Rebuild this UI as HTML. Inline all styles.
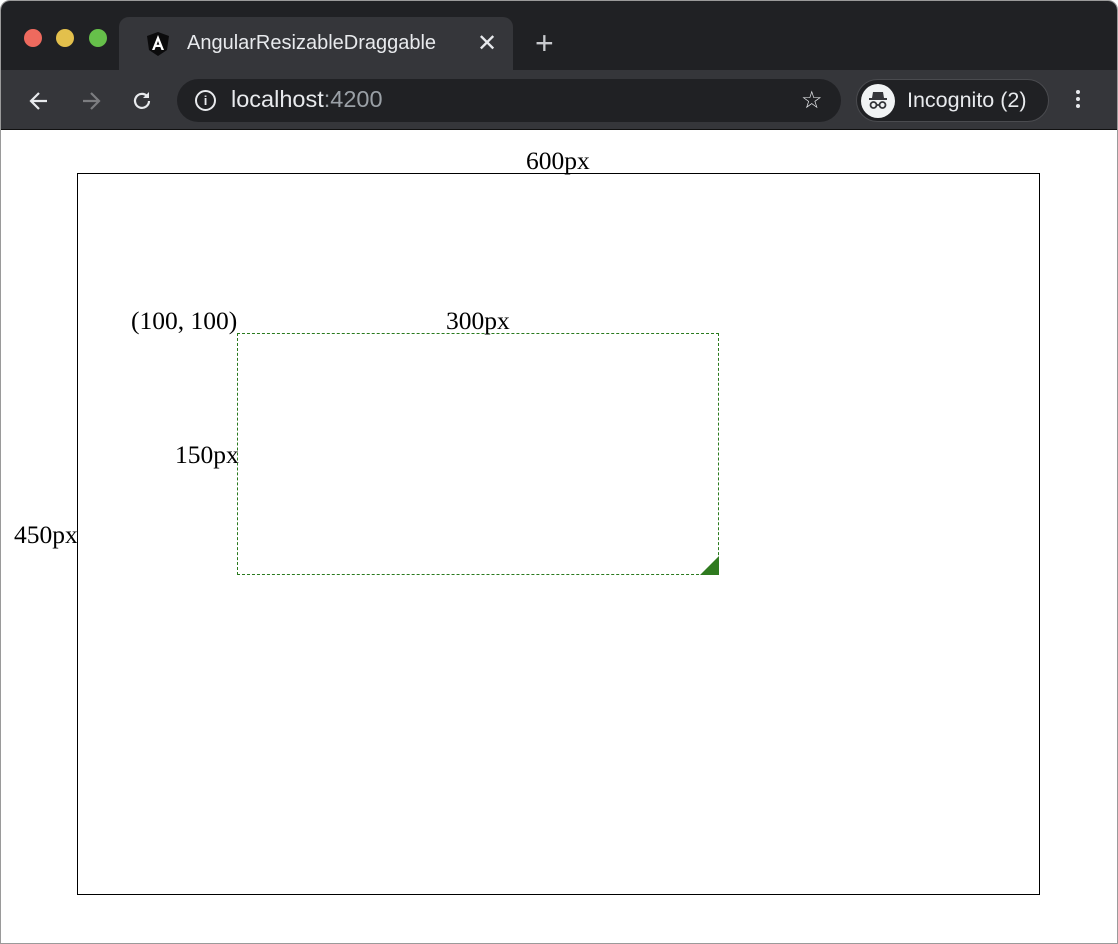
<!DOCTYPE html><html><head><style>
body{margin:0;width:1118px;height:944px;background:#fff;position:relative;overflow:hidden;font-family:"Liberation Sans",sans-serif}
.a{position:absolute}
.t{position:absolute;font-family:"Liberation Serif",serif;font-size:25.5px;color:#000;line-height:1}
</style></head><body>
<div class="a" style="left:0;top:0;width:1116px;height:942px;border:1px solid #9a9a9a;border-radius:10px 10px 0 0;overflow:hidden;background:#fff">
<div class="a" style="left:0;top:0;width:1116px;height:70px;background:#202124"></div>
<div class="a" style="left:0;top:69px;width:1116px;height:59px;background:#35363a;border-bottom:1px solid #111"></div>
<div class="a" style="left:23px;top:28px;width:18px;height:18px;border-radius:50%;background:#ee6a5e"></div>
<div class="a" style="left:55px;top:28px;width:18px;height:18px;border-radius:50%;background:#e3c04c"></div>
<div class="a" style="left:88px;top:28px;width:18px;height:18px;border-radius:50%;background:#66c04a"></div>
<div class="a" style="left:118px;top:16px;width:394px;height:54px;background:#35363a;border-radius:10px 10px 0 0"></div>
<svg class="a" style="left:146px;top:31px" width="22" height="24" viewBox="0 0 22 24"><path d="M11 0L0 4l2 14 9 6 9-6 2-14z" fill="#0b0b0c"/><path d="M11 3L5 18h2.5l1.2-3h4.6l1.2 3H17zM9.6 12.8L11 9l1.4 3.8z" fill="#fff"/></svg>
<div class="a" style="left:186px;top:31px;color:#e8eaed;font-size:20px">AngularResizableDraggable</div>
<div class="a" style="left:476px;top:28px;color:#e8eaed;font-size:24px">✕</div>
<div class="a" style="left:534px;top:24px;color:#c8cace;font-size:32px;font-weight:300">+</div>
<svg class="a" style="left:26px;top:88px" width="24" height="24" viewBox="0 0 24 24"><path d="M20 12H5M12 4l-8 8 8 8" stroke="#e8eaed" stroke-width="2.2" fill="none"/></svg>
<svg class="a" style="left:78px;top:88px" width="24" height="24" viewBox="0 0 24 24"><path d="M4 12h15M12 4l8 8-8 8" stroke="#7c7d80" stroke-width="2.2" fill="none"/></svg>
<svg class="a" style="left:129px;top:88px" width="24" height="24" viewBox="0 0 24 24"><path d="M19 12a7 7 0 1 1-2-5" stroke="#e8eaed" stroke-width="2.2" fill="none"/><path d="M19 3v6h-6z" fill="#e8eaed"/></svg>
<div class="a" style="left:176px;top:78px;width:664px;height:43px;background:#202124;border-radius:22px"></div>
<div class="a" style="left:194px;top:89px;width:17px;height:17px;border:2px solid #e8eaed;border-radius:50%;color:#e8eaed;font-size:13px;font-weight:bold;text-align:center;line-height:17px">i</div>
<div class="a" style="left:230px;top:85px;font-size:23.5px;color:#e8eaed">localhost<span style="color:#9aa0a6">:4200</span></div>
<div class="a" style="left:800px;top:85px;font-size:24px;color:#e8eaed">☆</div>
<div class="a" style="left:855px;top:78px;width:191px;height:41px;background:#202124;border:1px solid #4a4b4f;border-radius:22px"></div>
<div class="a" style="left:860px;top:83px;width:34px;height:34px;border-radius:50%;background:#f1f3f4"></div>
<svg class="a" style="left:865px;top:88px" width="24" height="24" viewBox="0 0 24 24"><path d="M7 3h10l1 6H6z M3 9h18v2H3z" fill="#35363a"/><circle cx="7.5" cy="16" r="3" stroke="#35363a" stroke-width="1.8" fill="none"/><circle cx="16.5" cy="16" r="3" stroke="#35363a" stroke-width="1.8" fill="none"/><path d="M10.5 16h3" stroke="#35363a" stroke-width="1.8"/></svg>
<div class="a" style="left:906px;top:87px;font-size:21.5px;color:#e8eaed">Incognito (2)</div>
<div class="a" style="left:1075px;top:89px;width:4px;height:4px;border-radius:50%;background:#e8eaed;box-shadow:0 7px #e8eaed,0 14px #e8eaed"></div>
</div>
<div class="a" style="left:77px;top:173px;width:961px;height:720px;border:1px solid #000"></div>
<div class="a" style="left:237px;top:333px;width:480px;height:240px;border:1px dashed #2a7a1e"></div>
<svg class="a" style="left:700px;top:556px" width="20" height="20"><path d="M19 0L19 19 0 19z" fill="#2f7a1f"/></svg>
<div class="t" style="left:526px;top:148px">600px</div>
<div class="t" style="left:131px;top:308px">(100, 100)</div>
<div class="t" style="left:446px;top:308px">300px</div>
<div class="t" style="left:175px;top:442px">150px</div>
<div class="t" style="left:14px;top:522px">450px</div>
</body></html>
